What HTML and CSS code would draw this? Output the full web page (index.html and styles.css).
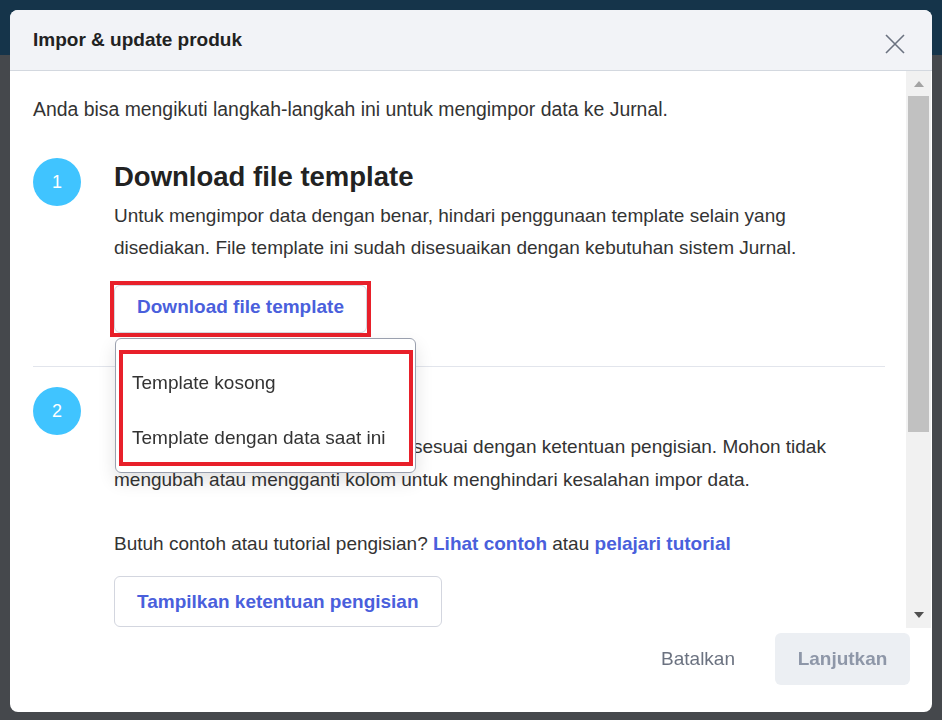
FILE: index.html
```html
<!DOCTYPE html>
<html lang="id">
<head>
  <meta charset="UTF-8" />
  <meta name="viewport" content="width=device-width, initial-scale=1.0"/>
  <title>Impor &amp; update produk</title>
  <link rel="stylesheet" href="styles.css">
</head>
<body>
  <div class="backdrop">
    <div class="app-bar"></div>
    <div class="app-rest"></div>
  </div>

  <div class="modal">
    <header class="modal-header">
      <h2>Impor &amp; update produk</h2>
      <button class="close-btn" title="Tutup">
        <svg width="20" height="20" viewBox="0 0 20 20">
          <path d="M1 1 L19 19 M19 1 L1 19" stroke="#6b7280" stroke-width="1.6" fill="none"/>
        </svg>
      </button>
    </header>

    <div class="modal-main">
      <div class="modal-body">
        <p class="intro">Anda bisa mengikuti langkah-langkah ini untuk mengimpor data ke Jurnal.</p>

        <section class="step">
          <div class="step-num">1</div>
          <div class="step-content">
            <h3>Download file template</h3>
            <p>Untuk mengimpor data dengan benar, hindari penggunaan template selain yang disediakan. File template ini sudah disesuaikan dengan kebutuhan sistem Jurnal.</p>
            <div class="download-wrap">
              <button class="btn-outline">Download file template</button>
              <span class="mark mark-btn"></span>
              <div class="dropdown">
                <div class="dropdown-item">Template kosong</div>
                <div class="dropdown-item">Template dengan data saat ini</div>
                <span class="mark mark-menu"></span>
              </div>
            </div>
          </div>
        </section>

        <section class="step step-divided">
          <div class="step-num">2</div>
          <div class="step-content">
            <h3>Isi file template</h3>
            <p>Pastikan isi data pada file template sesuai dengan ketentuan pengisian. Mohon tidak mengubah atau mengganti kolom untuk menghindari kesalahan impor data.</p>
            <p class="help">Butuh contoh atau tutorial pengisian? <a href="#">Lihat contoh</a> atau <a href="#">pelajari tutorial</a></p>
            <button class="btn-outline">Tampilkan ketentuan pengisian</button>
          </div>
        </section>
      </div>

      <div class="scrollbar">
        <span class="arrow-up"></span>
        <span class="thumb"></span>
        <span class="arrow-down"></span>
      </div>
    </div>

    <footer class="modal-footer">
      <button class="btn-text">Batalkan</button>
      <button class="btn-disabled">Lanjutkan</button>
    </footer>
  </div>
</body>
</html>
```

FILE: styles.css
```css
:root {
  --blue: #4a5fdc;
  --text: #333;
  --muted: #6b7280;
  --line: #e2e5ec;
  --accent: #40c4ff;
  --mark: #e8202a;
}
* {
  box-sizing: border-box;
}
body {
  margin: 0;
  font-family: "Liberation Sans", Arial, sans-serif;
  color: var(--text);
  height: 720px;
  overflow: hidden;
}
.backdrop {
  display: flex;
  flex-direction: column;
  height: 720px;
}
.app-bar {
  height: 55px;
  background: #15344a;
}
.app-rest {
  flex: 1;
  background: #45484c;
}
.modal {
  position: fixed;
  top: 10px;
  left: 10px;
  width: 922px;
  height: 702px;
  background: #fff;
  border-radius: 8px;
  display: flex;
  flex-direction: column;
  overflow: hidden;
}
.modal-header {
  height: 61px;
  flex: none;
  background: #f2f3f7;
  border-bottom: 1px solid #d3d8df;
  display: flex;
  align-items: center;
  justify-content: space-between;
  padding: 0 27px 0 23px;
}
.modal-header h2 {
  margin: 0;
  font-size: 19px;
  font-weight: bold;
  color: #222;
}
.close-btn {
  background: none;
  border: none;
  padding: 0;
  margin-top: 8px;
  width: 20px;
  height: 20px;
  cursor: pointer;
}
.modal-main {
  flex: 1;
  display: flex;
  min-height: 0;
  padding-right: 1px;
}
.modal-body {
  flex: 1;
  overflow: hidden;
  padding: 26px 21px 0 23px;
}
.intro {
  margin: 0 0 16px;
  font-size: 19.4px;
  line-height: 24px;
}
.step {
  display: flex;
  gap: 33px;
  padding: 21px 0 33px;
}
.step-divided {
  border-top: 1px solid var(--line);
  padding-top: 20px;
}
.step-num {
  flex: none;
  width: 48px;
  height: 48px;
  border-radius: 50%;
  background: var(--accent);
  color: #fff;
  font-size: 18px;
  display: flex;
  align-items: center;
  justify-content: center;
}
.step-content {
  flex: 1;
}
.step-content h3 {
  margin: 3px 0 7px;
  font-size: 27.5px;
  line-height: 32px;
  color: #222;
}
.step-divided h3 {
  margin-bottom: 8px;
}
.step-content p {
  margin: 0;
  font-size: 19px;
  line-height: 32px;
}
.step-divided p {
  line-height: 33px;
}
.step-content .help {
  margin-top: 32px;
  line-height: 32px;
}
.help a {
  color: var(--blue);
  font-weight: bold;
  text-decoration: none;
}
.download-wrap {
  position: relative;
  margin-top: 21px;
  width: 253px;
}
.btn-outline {
  display: block;
  height: 48px;
  padding: 0 22px;
  background: #fff;
  border: 1px solid #d3d6df;
  border-radius: 6px;
  color: var(--blue);
  font-family: inherit;
  font-size: 19px;
  font-weight: bold;
  white-space: nowrap;
  cursor: pointer;
}
.download-wrap .btn-outline {
  width: 253px;
  padding: 0 0 4px;
}
.step-divided .btn-outline {
  margin-top: 16px;
  height: 51px;
}
.mark {
  position: absolute;
  border: 4px solid var(--mark);
  pointer-events: none;
}
.mark-btn {
  left: -4px;
  top: -4px;
  width: 261px;
  height: 56px;
}
.dropdown {
  position: absolute;
  left: 1px;
  top: 53px;
  width: 301px;
  padding: 16px 0 7px;
  background: #fff;
  border: 1px solid #9aa0ae;
  border-radius: 6px;
  box-shadow: 0 8px 18px rgba(0, 0, 0, 0.12);
  z-index: 2;
}
.dropdown-item {
  height: 55px;
  line-height: 55px;
  padding-left: 16px;
  font-size: 19px;
  color: #333;
}
.mark-menu {
  left: 3px;
  top: 11px;
  width: 294px;
  height: 116px;
}
.scrollbar {
  flex: none;
  width: 25px;
  background: #f1f1f1;
  display: flex;
  flex-direction: column;
  align-items: center;
  padding: 10px 0 10px;
}
.arrow-up, .arrow-down {
  width: 0;
  height: 0;
  border-left: 5px solid transparent;
  border-right: 5px solid transparent;
}
.arrow-up {
  border-bottom: 6px solid #a3a3a3;
}
.arrow-down {
  margin-top: auto;
  border-top: 6px solid #505050;
}
.thumb {
  width: 21px;
  height: 336px;
  margin-top: 9px;
  background: #c1c1c1;
}
.modal-footer {
  height: 84px;
  flex: none;
  display: flex;
  justify-content: flex-end;
  align-items: flex-start;
  gap: 20px;
  padding: 5px 22px 0;
}
.modal-footer button {
  height: 52px;
  border: none;
  font-family: inherit;
  font-size: 19px;
  cursor: pointer;
}
.btn-text {
  background: none;
  color: var(--muted);
  padding: 0 20px;
}
.btn-disabled {
  background: #eceff3;
  color: #8e97a8;
  font-weight: bold;
  padding: 0 20px;
  border-radius: 6px;
  width: 135px;
}
```
